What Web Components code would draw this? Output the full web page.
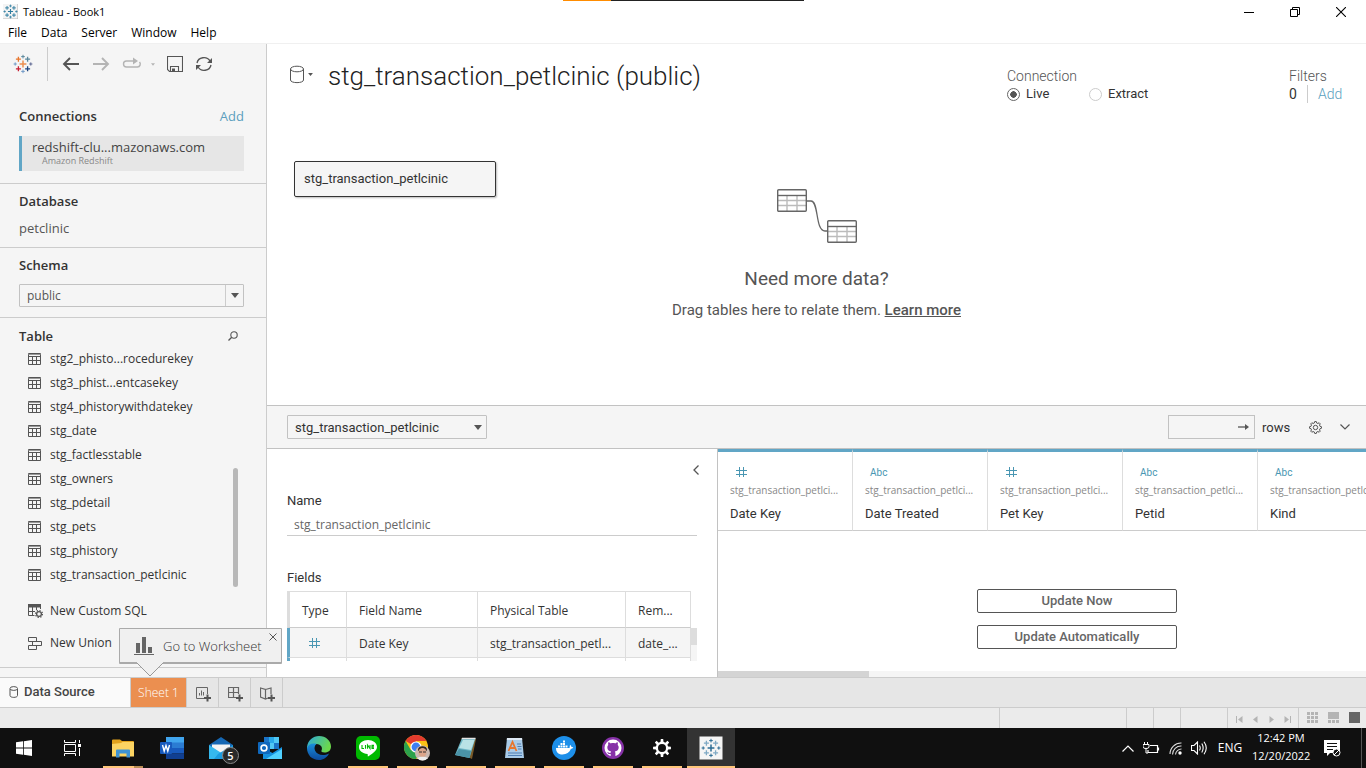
<!DOCTYPE html>
<html lang="en">
<head>
<meta charset="utf-8">
<title>Tableau - Book1</title>
<style>
html, body { margin: 0; height: 100%; }
body { font-family: Roboto, "Liberation Sans", sans-serif; font-size: 13px; color: #333; background: #fff; overflow: hidden; }
</style>
</head>
<body>
<tb-app></tb-app>
<script>
const define = (name, css, html) => {
  const template = document.createElement('template');
  const base = ':host{display:block;box-sizing:border-box}*,*::before{box-sizing:border-box}button,input,select{font:inherit;color:inherit;margin:0;border-radius:0}button{background:none;border:0;padding:0;cursor:pointer}';
  customElements.define(name, class extends HTMLElement {
    connectedCallback() {
      if (this.shadowRoot) return;
      template.innerHTML = `<style>${base}${css}</style>${typeof html === 'function' ? html(this) : html}`;
      this.attachShadow({ mode: 'open' }).append(template.content.cloneNode(true));
    }
  });
};

/* ---------- icons ---------- */
const plus = (x, y, r, c, w) => `<path d="M${x - r} ${y}H${x + r}M${x} ${y - r}V${y + r}" stroke="${c}" stroke-width="${w}"/>`;
const logo = (c) => plus(10, 10, 3.4, c[0], 1.5) + plus(5.4, 5.2, 2.5, c[1], 1.3) + plus(14.6, 5.2, 2.5, c[2], 1.3) +
  plus(5.4, 14.8, 2.5, c[3], 1.3) + plus(14.6, 14.8, 2.5, c[4], 1.3) + plus(10, 2.6, 1.8, c[5], 1) + plus(10, 17.4, 1.8, c[6], 1) +
  plus(2.2, 10, 1.6, c[7], 1) + plus(17.8, 10, 1.6, c[8], 1);
const miniTable = (x, y) => `<g transform="translate(${x} ${y})"><path d="M1 11.5H29M1 16.5H29M10 7V22M20 7V22" stroke="#bbb" stroke-width="1.4"/><path d="M1 6.5H29" stroke="#666" stroke-width="1.4"/><rect x=".7" y=".7" width="28.6" height="21.6" rx="1" stroke="#666" stroke-width="1.4"/></g>`;
const gearPath = (cx, cy, r1, r2, n) => {
  let d = '';
  for (let i = 0; i < n; i++) [-.3, -.17, .17, .3].forEach((o, k) => {
    const a = (i + o) * 2 * Math.PI / n, r = k === 0 || k === 3 ? r1 : r2;
    d += (d ? 'L' : 'M') + (cx + r * Math.cos(a)).toFixed(2) + ' ' + (cy + r * Math.sin(a)).toFixed(2);
  });
  return d + 'Z';
};
const ICONS = {
  logo: [20, 20, logo(['#eb8f50', '#e8762d', '#5b879b', '#c72035', '#1f447e', '#5b879b', '#7199c6', '#7199c6', '#5c6692'])],
  'logo-blue': [20, 20, `<rect x="0" y="0" width="20" height="20" fill="#f4f4f4"/><path d="M20 0V20H0" stroke="#bbb" stroke-width="1.5"/>` + logo(Array(9).fill('#2f7da0'))],
  'logo-tile': [24, 24, `<rect x=".5" y=".5" width="23" height="23" fill="#f5f5f5"/><g transform="translate(2 2)">${logo(['#2b6c94', '#7fa9c4', '#7fa9c4', '#7fa9c4', '#7fa9c4', '#2b6c94', '#2b6c94', '#2b6c94', '#2b6c94'])}</g>`],
  back: [18, 14, '<path d="M17 7H2M8 1L2 7L8 13" stroke="#555" stroke-width="1.9"/>'],
  forward: [18, 14, '<path d="M1 7H16M10 1L16 7L10 13" stroke="#b4b4b4" stroke-width="1.9"/>'],
  redo: [20, 14, '<path d="M12 4H4.500A3 3 0 0 0 4.500 10H15.500A3 3 0 0 0 17.500 5" stroke="#b4b4b4" stroke-width="1.400"/><path d="M11 .5L16 4L11 7.500Z" fill="#b4b4b4"/>'],
  save: [16, 16, '<path d="M.5 .5H15.500V15.500H2.500L.5 13.500Z" stroke="#555" stroke-width="1.1"/><path d="M3.500 15V10.500H11.500V15" stroke="#555" stroke-width="1.1"/><path d="M5 12.500H8V15H5Z" fill="#555"/>'],
  refresh: [18, 16, '<path d="M2 7A7 6.500 0 0 1 15 5M16 9A7 6.500 0 0 1 3 11" stroke="#555" stroke-width="1.300"/><path d="M17 2V7H12Z M1 14V9H6Z" fill="#555"/>'],
  caret: [8, 5, '<path d="M0 0H8L4 5Z" fill="#555"/>'],
  'caret-light': [8, 5, '<path d="M0 0H8L4 5Z" fill="#b4b4b4"/>'],
  search: [10, 10, '<circle cx="6" cy="4" r="3.200" stroke="#555" stroke-width="1.1"/><path d="M3.700 6.300L.5 9.500" stroke="#555" stroke-width="1.3"/>'],
  table: [13, 12, '<path d="M.5 .5H12.500V11.500H.5Z M.5 3.500H12.500M.5 7.500H12.500M4.500 3.500V11.500M8.500 3.500V11.500" stroke="#555"/><path d="M.5 1.500H12.500" stroke="#999"/>'],
  sql: [15, 14, '<path d="M0 0H13V3.500H0Z" fill="#555"/><path d="M.5 2V11.500H6.500M.5 7.500H7M4.500 3V11.500M8.500 3V6M12.500 3V5" stroke="#555"/><circle cx="11" cy="10" r="2.400" stroke="#555" stroke-width="1.3"/><circle cx="11" cy="10" r="3.500" stroke="#555" stroke-width="1.2" stroke-dasharray="1.300 1.450"/>'],
  union: [14, 13, '<path d="M.5 .5H8.500V4.500H.5ZM.5 8.500H8.500V12.500H.5ZM4.500 4.500H13.500V8.500H4.500Z" fill="#f5f5f5" stroke="#555"/>'],
  db: [16, 19, '<path d="M1.500 4V15C1.500 18.500 14.500 18.500 14.500 15V4" stroke="#555"/><ellipse cx="8" cy="4" rx="6.500" ry="2.800" stroke="#555"/>'],
  'db-small': [10, 12, '<path d="M1 3V9.500C1 12 8.500 12 8.500 9.500V3" stroke="#555"/><ellipse cx="4.750" cy="2.500" rx="3.750" ry="1.900" stroke="#555"/>'],
  relate: [80, 54, `<path d="M29 12H34C42 12 38 42 48 42H51" stroke="#666" stroke-width="1.300"/>${miniTable(0, 0)}${miniTable(50, 31)}`],
  number: [11, 10, '<path d="M3.500 0V10M7.500 0V10M0 3.500H11M0 7.500H11" stroke="#4996b2" stroke-width="1"/>'],
  arrow: [11, 8, '<path d="M0 4H8" stroke="#555" stroke-width="1.300"/><path d="M7 1L11 4L7 7Z" fill="#555"/>'],
  gear: [13, 13, `<path d="${gearPath(6.5, 6.5, 4.7, 6, 8)}" stroke="#555"/><circle cx="6.500" cy="6.500" r="2.200" stroke="#555"/>`],
  down: [10, 6, '<path d="M.5 .5L5 5L9.500 .5" stroke="#555" stroke-width="1.200"/>'],
  left: [6, 10, '<path d="M5.500 .5L1 5L5.500 9.500" stroke="#555" stroke-width="1.300"/>'],
  close: [8, 8, '<path d="M.5 .5L7.500 7.500M7.500 .5L.5 7.500" stroke="#555"/>'],
  bars: [20, 18, '<path d="M2 6H6V16H2ZM8 0H12V16H8ZM14 10H18V16H14Z" fill="#666"/><path d="M0 17.500H20" stroke="#666"/>'],
  'add-sheet': [16, 15, '<path d="M8 11.500H.5V.5H11.500V7M3.500 8.500V6M5.500 8.500V3.500M7.500 8.500V5" stroke="#666"/><path d="M11.500 7.500V14.500M8 11H15" stroke="#555" stroke-width="2"/>'],
  'add-dash': [16, 15, '<path d="M8 10.500H.5V.5H10.500V7M5.500 .5V10.500M.5 5.500H10.500" stroke="#666" stroke-width="1.200"/><path d="M11.500 7.500V14.500M8 11H15" stroke="#555" stroke-width="2"/>'],
  'add-story': [16, 15, '<path d="M8 11L5.500 12L.5 10V1L5.500 2.500V12M5.500 2.500L11 1V7" stroke="#666" stroke-width="1.200"/><path d="M11.500 7.500V14.500M8 11H15" stroke="#555" stroke-width="2"/>'],
  first: [7, 7, '<path d="M.5 0V7" stroke="#b4b4b4"/><path d="M6.500 0V7L2 3.500Z" fill="#b4b4b4"/>'],
  prev: [5, 7, '<path d="M4.500 0V7L0 3.500Z" fill="#b4b4b4"/>'],
  next: [5, 7, '<path d="M.5 0V7L5 3.500Z" fill="#b4b4b4"/>'],
  last: [7, 7, '<path d="M6.500 0V7" stroke="#b4b4b4"/><path d="M.5 0V7L5 3.500Z" fill="#b4b4b4"/>'],
  grid: [11, 11, '<path d="M0 0H3V3H0ZM4 0H7V3H4ZM8 0H11V3H8ZM0 4H3V7H0ZM4 4H7V7H4ZM8 4H11V7H8ZM0 8H3V11H0ZM4 8H7V11H4ZM8 8H11V11H8Z" fill="#b4b4b4"/>'],
  film: [11, 11, '<path d="M0 0H11V7H0ZM0 8H3V11H0ZM4 8H7V11H4ZM8 8H11V11H8Z" fill="#b4b4b4"/>'],
  full: [11, 11, '<path d="M0 0H11V11H0Z" fill="#666"/>'],
  min: [10, 10, '<path d="M0 5.500H10" stroke="#000"/>'],
  restore: [10, 10, '<path d="M.5 2.500H7.500V9.500H.5ZM2.500 2.500V.5H9.500V7.500H7.500" stroke="#000"/>'],
  x: [10, 10, '<path d="M0 0L10 10M10 0L0 10" stroke="#000" stroke-width="1.100"/>'],
  /* taskbar */
  start: [16, 16, '<path d="M0 2.300L7 1.300V7.600H0ZM7.800 1.200L16 0V7.600H7.800ZM0 8.400H7V14.700L0 13.700ZM7.800 8.400H16V16L7.800 14.800Z" fill="#fff"/>'],
  taskview: [17, 16, '<path d="M.5 0V2.500H11.500V0M.5 4.500H11.500V11.500H.5ZM.5 16V13.500H11.500V16M15.500 0V3M15.500 8V16" stroke="#fff"/><path d="M14 4H17V7H14Z" fill="#fff"/>'],
  explorer: [22, 19, '<path d="M0 1.500Q0 .5 1 .5H8L10 2H21Q22 2 22 3V16H0Z" fill="#e2a21c"/><path d="M0 5L9 4L10.500 3H22V17.500H0Z" fill="#fcd462"/><path d="M4 18.500V11.500Q4 10.500 5 10.500H17Q18 10.500 18 11.500V18.500H14.500V14.500H7.500V18.500Z" fill="#3f93d2"/>'],
  word: [24, 22, '<path d="M6 0H24V6H6Z" fill="#41a5ee"/><path d="M6 5.500H24V11H6Z" fill="#2b7cd3"/><path d="M6 11H24V16.500H6Z" fill="#185abd"/><path d="M6 16.500H24V22H6Z" fill="#103f91"/><rect x="0" y="5" width="12" height="12" rx="1" fill="#185abd"/><path d="M2.500 8L4.200 14L6 8.500L7.800 14L9.500 8" stroke="#fff" stroke-width="1.400"/>'],
  mail: [24, 22, '<path d="M0 8L12 0L24 8V22H0Z" fill="#1668b4"/><path d="M3 7.500H21V14L12 18L3 14Z" fill="#f4f4f4"/><path d="M0 8L14 17L8 22H0Z" fill="#35b8ee"/><path d="M24 8L9 17L5 22H24Z" fill="#1c9be0"/>'],
  outlook: [24, 22, '<path d="M6 0H21V12H6Z" fill="#1a74c8"/><path d="M11 0H16V6H11Z" fill="#28a8ea"/><path d="M16 0H21V6H16ZM11 6H16V12H11Z" fill="#50c8f5"/><path d="M5 11L14.500 16L24 10V22H5Z" fill="#1490df"/><path d="M8 22L24 12V22Z" fill="#50d0ff"/><rect y="5" width="12" height="12" rx="1" fill="#0f68bd"/><circle cx="6" cy="11" r="2.900" stroke="#fff" stroke-width="1.600"/>'],
  edge: [24, 24, '<defs><linearGradient id="a" x1="0" y1="0" x2="1" y2=".4"><stop stop-color="#2ba8e0"/><stop offset="1" stop-color="#6bd84c"/></linearGradient><linearGradient id="b" x1="0" y1="0" x2="0" y2="1"><stop stop-color="#1a8fdc"/><stop offset="1" stop-color="#0c4a9c"/></linearGradient></defs><path d="M0 11C1 4 6 0 12 0C19 0 24 5 24 10.500C24 15 20.500 16.500 17.500 16.500C15 16.500 14 15.500 14.500 14.500C16 12 14 8 9.500 8C5 8 1 11 0 14Z" fill="url(#a)"/><path d="M0 12C1 9 5 6.500 9.500 8C7.500 9.500 7 12 8 14.500C10 19 16 20.500 22 17.500C20 21.500 16.500 24 12 24C5 24 0 19 0 12Z" fill="url(#b)"/>'],
  line: [24, 24, '<rect width="24" height="24" rx="5" fill="#00b900"/><path d="M12 4C17 4 21 7 21 11C21 15 15 18.500 12 20.500C11.500 20.500 12 18.500 11.500 18C6.500 17.500 3 15 3 11C3 7 7 4 12 4Z" fill="#fff"/><path d="M6 9V12.500H8M9.500 9V12.800M11.500 12.800V9L14 12.500V9M18 9.400H16V12.400H18M16 10.900H18" stroke="#00b900" stroke-width="1.100"/>'],
  chrome: [27, 26, '<circle cx="12" cy="12" r="12" fill="#fbc116"/><path d="M12 12L1.600 6A12 12 0 0 1 22.400 6H12Z" fill="#e33b2e"/><path d="M1.600 6A12 12 0 0 0 12 24L17 15L12 12L6.800 15Z" fill="#2ca24c"/><circle cx="12" cy="12" r="5.600" fill="#fff"/><circle cx="12" cy="12" r="4.400" fill="#3d7ff0"/><circle cx="18.500" cy="18" r="7.500" fill="#c9b8b0"/><path d="M14 14.500C14 10 23 10 23 14.500L22.500 16H14.500Z" fill="#33261f"/><ellipse cx="18.500" cy="17.500" rx="4" ry="4.600" fill="#dca58a"/><path d="M15 17H18M19 17H22" stroke="#333" stroke-width="1.200"/><path d="M13 23Q18.500 20.500 24 23Q18.500 28 13 23Z" fill="#eee"/>'],
  notepad: [24, 22, '<path d="M7 1L22 2L18 22L16 21Z" fill="#7a5a28"/><path d="M8 1H21.500L15.500 21L1 18Z" fill="#6fb7c6"/><path d="M9 3H20.500L17 13L5 11Z" fill="#b9e2e6"/><path d="M1 18L5 12L17 14L15.500 21Z" fill="#4a93a8"/><path d="M8 1.500H21.500" stroke="#e6e6e6" stroke-width="1.500"/>'],
  wordpad: [20, 22, '<path d="M2 1H17L19 21H0Z" fill="#a9cbe8"/><path d="M2 1H17L17.200 3H1.800Z" fill="#dfeaf5"/><path d="M3.500 14L7.500 5L11.500 14M5 11H10" stroke="#e8762d" stroke-width="1.800"/><path d="M12 7H16M12.500 9.500H16.500M13 12H16.500M3 16H17M3 18.500H17" stroke="#4f7fb4" stroke-width="1.200"/>'],
  docker: [24, 24, '<circle cx="12" cy="12" r="12" fill="#1d8fe9"/><path d="M4 12H17.500C18 11.500 17.300 10 18.300 9C19.200 9.500 19.300 10.500 19.500 11C20.500 10.700 21 11 21.300 11.300C20.800 12.600 19.700 12.800 19 12.800C17.500 16.500 14.500 18.500 10.500 18.500C6 18.500 4 16 4 12Z" fill="#fff"/><path d="M6 9.500H8V11.400H6ZM8.500 9.500H10.500V11.400H8.500ZM11 9.500H13V11.400H11ZM13.500 9.500H15.500V11.400H13.500ZM8.500 7H10.500V9H8.500ZM11 7H13V9H11ZM11 4.600H13V6.500H11Z" fill="#fff"/>'],
  github: [22, 22, '<circle cx="11" cy="11" r="11" fill="#8732a8"/><circle cx="11" cy="11" r="8.500" fill="#fff"/><path d="M8.700 20V17C6.300 17.400 5.800 15.800 5 15.200C6.300 14.900 6.600 16.200 8.700 15.800C8.700 15.200 8.900 14.700 9.200 14.400C6.800 14.100 5.300 12.900 5.300 10.300C5.300 9.300 5.700 8.500 6.300 7.900C6.100 7.200 6 6.200 6.400 5.300C7.300 5.300 8.200 6 8.700 6.400C10 6 12 6 13.300 6.400C13.800 6 14.700 5.300 15.600 5.300C16 6.200 15.900 7.200 15.700 7.900C16.300 8.500 16.700 9.300 16.700 10.300C16.700 12.900 15.200 14.100 12.800 14.400C13.200 14.800 13.400 15.400 13.400 16V20Z" fill="#8732a8"/>'],
  settings: [18, 18, `<path fill="#fff" fill-rule="evenodd" d="${gearPath(9, 9, 6.3, 9, 8)}M9 5A4 4 0 1 0 9 13A4 4 0 1 0 9 5Z"/>`],
  up: [12, 7, '<path d="M.5 6.500L6 1L11.500 6.500" stroke="#fff" stroke-width="1.200"/>'],
  battery: [17, 12, '<path d="M7 3.500H14.500V10.500H5V8M15.500 5.500V8.500" stroke="#fff" stroke-width="1.200"/><path d="M1.500 0V2.500M4.500 0V2.500M0 2.500H6V5Q6 6.500 3 6.500Q0 6.500 0 5ZM3 6V11H5" stroke="#fff"/>'],
  wifi: [13, 13, '<path d="M1 12A11 11 0 0 1 12.500 1M3.500 12.500A8.500 8.500 0 0 1 12.500 4M6.500 12.500A6 6 0 0 1 12.500 7" stroke="#ddd" stroke-width="1.100"/><circle cx="11" cy="11" r="1.700" fill="#fff"/>'],
  sound: [17, 14, '<path d="M.5 4.500H3L6.500 1V13L3 9.500H.5Z M8.500 4.500Q10 7 8.500 9.500M10.800 2.500Q13.500 7 10.800 11.500M13 .8Q17.500 7 13 13.200" stroke="#fff" stroke-width="1.100"/>'],
  notify: [17, 17, '<path d="M0 0H16V13H6L3 16V13H0Z" fill="#fff"/><path d="M3 3.500H13M3 6.500H13M3 9.500H9" stroke="#111"/><circle cx="12.500" cy="12.500" r="3.500" fill="#111" stroke="#fff"/><path d="M10 15L15 10" stroke="#fff"/>']
};
define('tb-icon', ':host{display:inline-block;line-height:0;flex:none}svg{display:block;fill:none}', el => {
  const [w, h, body] = ICONS[el.getAttribute('name')];
  return `<svg width="${w}" height="${h}" viewBox="0 0 ${w} ${h}" aria-hidden="true">${body}</svg>`;
});
const icon = n => `<tb-icon name="${n}"></tb-icon>`;

/* ---------- window chrome ---------- */
define('tb-titlebar', `
:host{position:relative;display:flex;align-items:center;height:23px;padding-left:3px;gap:5px;font:11px "Open Sans",sans-serif;color:#000;background:#fff}
.name{flex:1}
.controls{display:flex;padding-right:2px}
button{width:46px;height:22px;display:grid;place-items:center}
.strip{position:absolute;top:0;left:41.2%;width:241px;height:1px;background:linear-gradient(90deg,#ff8c00 48px,#222 48px)}
.app{width:15px;height:15px;overflow:hidden}
`, `<svg class="app" viewBox="0 0 20 20" fill="none" aria-hidden="true">${ICONS['logo-blue'][2]}</svg><span class="name">Tableau - Book1</span><span class="strip"></span>
<div class="controls"><button aria-label="Minimize">${icon('min')}</button><button aria-label="Restore">${icon('restore')}</button><button aria-label="Close">${icon('x')}</button></div>`);

define('tb-menubar', `
:host{display:flex;height:21px;align-items:flex-end;padding:0 0 1px 8px;gap:14px;font:12px "Open Sans",sans-serif;color:#000;border-bottom:1px solid #f0f0f0;background:#fff}
button{line-height:18px}
`, ['File', 'Data', 'Server', 'Window', 'Help'].map(t => `<button>${t}</button>`).join(''));

/* ---------- sidebar ---------- */
define('tb-toolbar', `
:host{display:flex;align-items:center;height:40px;padding-left:13px}
.rule{width:1px;height:34px;background:#ccc;margin:0 14px}
button{display:grid;place-items:center}
.tools{display:flex;align-items:center;gap:12px}
.tools button{height:24px}
.tools .redo{display:flex;gap:9px}
.small{width:4px;height:3px}
`, `<button aria-label="Start page">${icon('logo')}</button><span class="rule"></span>
<div class="tools"><button aria-label="Back">${icon('back')}</button><button aria-label="Forward">${icon('forward')}</button>
<button class="redo" aria-label="Replay">${icon('redo')}<svg class="small" viewBox="0 0 8 5">${ICONS['caret-light'][2]}</svg></button>
<button aria-label="Save">${icon('save')}</button><button aria-label="Refresh">${icon('refresh')}</button></div>`);

define('tb-section', `
:host{border-bottom:1px solid #ccc;padding:7px 22px 0 19px}
header{display:flex;justify-content:space-between;align-items:center;height:20px}
h2{margin:0;font:600 13px/20px "Open Sans",sans-serif;color:#333}
`, el => `<header><h2>${el.getAttribute('heading')}</h2><slot name="action"></slot></header><slot></slot>`);

define('tb-select', `
:host{display:grid}
select,.caret{grid-area:1/1}
select{appearance:none;width:100%;height:var(--h,24px);border:1px solid #c2c2c2;border-radius:1px;background:#f5f5f5;padding:0 24px 0 7px;font-size:var(--size,13px);outline:0}
.caret{justify-self:end;display:grid;place-items:center;width:19px;margin:1px 0;pointer-events:none;border-left:1px solid var(--divider,transparent)}
`, el => `<select aria-label="${el.getAttribute('label')}"><option>${el.getAttribute('value')}</option></select><span class="caret">${icon('caret')}</span>`);

define('tb-item', `
:host{height:var(--row,24px);display:flex;align-items:center}
button{display:flex;align-items:center;padding-left:28px;font:12px/20px "Open Sans",sans-serif;color:#333}
.i{width:22px;display:flex}
`, el => `<button><span class="i">${icon(el.getAttribute('icon') || 'table')}</span><slot></slot></button>`);

define('tb-sidebar', `
:host{display:flex;flex-direction:column;background:#f5f5f5;border-right:1px solid #ccc;font-family:"Open Sans",sans-serif;min-height:0}
a{color:#5b9fbe;text-decoration:none}
.conn{padding-top:22px;padding-bottom:12px}
.card{width:100%;text-align:left;display:flex;flex-direction:column;justify-content:flex-start;height:35px;margin-top:10px;padding-top:3px;border-left:3px solid #61a6c6;background:#e6e6e6;padding-left:10px;color:#444}
.card b{font:13px/16px "Open Sans",sans-serif}
.card small{font-size:9px;line-height:12px;color:#888;padding-left:10px}
.db{padding-bottom:9px}
.db p{margin:7px 0 0;line-height:20px;font-size:13px;color:#555}
.schema{padding-bottom:10px}
tb-select{margin-top:9px;--h:23px;--size:12px;--divider:#ccc;color:#555}
.tables{flex:1;padding-top:8px;padding-right:28px;padding-bottom:8px;display:flex;flex-direction:column}
.list{position:relative;margin:1px -28px 8px -19px}
.list::before{content:"";position:absolute;right:28px;bottom:0;width:5px;height:119px;border-radius:3px;background:#b8b8b8}
.extra{margin-left:-19px;--row:32px}
.foot{height:9px}
`, `<tb-toolbar></tb-toolbar>
<tb-section class="conn" heading="Connections"><a slot="action" href="#add">Add</a>
<button class="card"><b>redshift-clu...mazonaws.com</b><small>Amazon Redshift</small></button></tb-section>
<tb-section class="db" heading="Database"><p>petclinic</p></tb-section>
<tb-section class="schema" heading="Schema"><tb-select label="Schema" value="public"></tb-select></tb-section>
<tb-section class="tables" heading="Table"><button slot="action" aria-label="Search tables">${icon('search')}</button>
<div class="list">${['stg2_phisto...rocedurekey', 'stg3_phist...entcasekey', 'stg4_phistorywithdatekey', 'stg_date', 'stg_factlesstable', 'stg_owners', 'stg_pdetail', 'stg_pets', 'stg_phistory', 'stg_transaction_petlcinic'].map(t => `<tb-item>${t}</tb-item>`).join('')}</div>
<div class="extra"><tb-item icon="sql">New Custom SQL</tb-item><tb-item icon="union">New Union</tb-item></div></tb-section>
<div class="foot"></div>`);

/* ---------- canvas ---------- */
define('tb-header', `
:host{display:flex;align-items:flex-start;padding:17px 24px 0 22px;height:74px}
.src{display:flex;align-items:center;gap:3px;height:26px}
.src svg{width:5px;height:3px}
h1{flex:1;margin:0 0 0 15px;font:300 26px/30px Roboto,sans-serif;color:#222}
.conn,.filters{font-size:14px;line-height:18px;padding-top:6px}
.conn{width:282px}
.cap{font-weight:300;color:#555}
fieldset{border:0;margin:0;padding:0}
.row{display:flex;align-items:center}
label{display:flex;align-items:center;gap:6px;font-size:13px;width:82px}
input{appearance:none;width:13px;height:13px;border:1px solid #ccc;border-radius:50%;background:#fff}
input:checked{border-color:#666;background:radial-gradient(#555 0 3px,#fff 3.5px)}
.filters{width:53px}
.filters a{color:#5b9fbe;text-decoration:none;font-weight:300;border-left:1px solid #ccc;padding-left:10px;margin-left:10px}
`, `<button class="src" aria-label="Data source">${icon('db')}<svg viewBox="0 0 8 5">${ICONS.caret[2]}</svg></button>
<h1>stg_transaction_petlcinic (public)</h1>
<fieldset class="conn"><div class="cap">Connection</div><div class="row"><label><input type="radio" name="c" checked>Live</label><label><input type="radio" name="c">Extract</label></div></fieldset>
<div class="filters"><div class="cap">Filters</div><div class="row">0<a href="#filters">Add</a></div></div>`);

define('tb-canvas', `
:host{position:relative;flex:1;min-height:0;display:flex;flex-direction:column}
.node{position:absolute;left:27px;top:117px;width:202px;height:36px;border:1px solid #333;border-radius:2px;background:#f5f5f5;text-align:left;padding:0 9px 2px;box-shadow:1px 1px 2px #bbb}
.empty{flex:1;display:flex;flex-direction:column;align-items:center;padding-top:71px;color:#555}
h2{margin:24px 0 0;font:400 19px/24px Roboto,sans-serif;color:#555}
p{margin:9px 0 0;font-size:15px;line-height:20px}
a{color:#555;font-weight:500}
`, `<tb-header></tb-header><button class="node">stg_transaction_petlcinic</button>
<div class="empty">${icon('relate')}<h2>Need more data?</h2><p>Drag tables here to relate them. <a href="#learn">Learn more</a></p></div>`);

/* ---------- preview pane ---------- */
define('tb-previewbar', `
:host{display:flex;align-items:center;height:44px;background:#f5f5f5;border:solid #c2c2c2;border-width:1px 0;padding:0 15px 0 20px}
tb-select{width:200px}
.rows{margin-left:auto;display:grid;align-items:center;width:87px}
.rows>*{grid-area:1/1}
.rows tb-icon{justify-self:end;margin-right:6px}
input{width:100%;height:24px;border:1px solid #c2c2c2;background:#f5f5f5;padding:0 24px 0 6px;outline:0}
label{margin-left:7px;width:47px;font-size:13px}
button{display:grid;place-items:center;height:24px}
.down{margin-left:17px;padding:0 1px}
`, `<tb-select label="Table" value="stg_transaction_petlcinic"></tb-select>
<div class="rows"><input id="rows" type="text">${icon('arrow')}</div><label for="rows">rows</label>
<button aria-label="Settings">${icon('gear')}</button><button class="down" aria-label="Collapse">${icon('down')}</button>`);

define('tb-fields', `
:host{display:flex;height:70px;overflow:hidden}
table{width:404px;border-collapse:separate;border-spacing:0;table-layout:fixed;border-top:1px solid #ddd;font:500 12px/18px "Open Sans",sans-serif}
th,td{border-right:1px solid #ddd;text-align:left;font-weight:500;padding:2px 0 0 12px;white-space:nowrap}
th{height:36px;border-bottom:1px solid #ccc}
td{height:30px;background:#f5f5f5;border-bottom:1px solid #ddd;font-weight:400}
th:first-child{border-left:3px solid #ddd}
td:first-child{border-left:3px solid #61a6c6;padding-left:19px}
.track{width:6px;margin-top:37px;background:#f5f5f5}
.track::before{content:"";display:block;height:17px;background:#ddd}
.next td{background:#fff}
`, `<table><colgroup><col style="width:60px"><col style="width:131px"><col style="width:148px"><col></colgroup>
<thead><tr><th>Type</th><th>Field Name</th><th>Physical Table</th><th>Rem...</th></tr></thead>
<tbody><tr><td>${icon('number')}</td><td>Date Key</td><td>stg_transaction_petl...</td><td>date_...</td></tr><tr class="next"><td></td><td></td><td></td><td></td></tr></tbody></table><div class="track"></div>`);

define('tb-details', `
:host{width:451px;border-right:1px solid #c2c2c2;padding:10px 20px 0;display:flex;flex-direction:column}
.top{display:flex;justify-content:flex-end;height:22px;align-items:center;margin-right:-4px}
.top button{width:10px;height:22px;display:grid;place-items:center}
label,h3{margin:0;font:400 13px/18px Roboto,sans-serif;color:#333}
label{margin-top:11px}
input{border:0;border-bottom:1px solid #ccc;height:26px;padding:4px 7px 0;font:12px "Open Sans",sans-serif;color:#666;outline:0;background:none}
h3{margin:33px 0 4px}
tb-fields{margin-right:-1px}
.body{display:flex;flex-direction:column}
`, `<div class="top"><button aria-label="Collapse details">${icon('left')}</button></div>
<div class="body"><label for="name">Name</label><input id="name" type="text" value="stg_transaction_petlcinic"><h3>Fields</h3><tb-fields></tb-fields></div>`);

define('tb-grid', `
:host{flex:1;min-width:0;overflow:hidden;display:flex;flex-direction:column}
table{width:675px;table-layout:fixed;border-collapse:separate;border-spacing:0}
th{height:82px;border-right:1px solid #ddd;border-bottom:1px solid #ccc;border-top:3px solid #61a6c6;padding:10px 0 0 12px;text-align:left;font-weight:400;vertical-align:top;white-space:nowrap}
.type{height:20px;display:flex;align-items:center;padding-left:6px;font-size:10px;color:#4996b2}
.abc{padding-left:5px}
.src{font:400 10px/16px "Open Sans",sans-serif;color:#888}
.name{font:400 13px/18px Roboto,sans-serif;padding-top:7px;line-height:18px}
.actions{flex:1;display:flex;flex-direction:column;align-items:center;gap:12px;padding:58px 0 0 70px}
.actions button{width:200px;height:24px;border:1px solid #555;border-radius:2px;font-weight:500;color:#666;background:#fff;padding-bottom:2px}
.track{height:6px;background:#f5f5f5}
.track::before{content:"";display:block;width:151px;height:6px;background:#d4d4d4}
`, `<table><thead><tr>${[['#', 'Date Key'], ['Abc', 'Date Treated'], ['#', 'Pet Key'], ['Abc', 'Petid'], ['Abc', 'Kind']].map(([t, n]) =>
  `<th><div class="type ${t === '#' ? '' : 'abc'}">${t === '#' ? icon('number') : t}</div><div class="src">stg_transaction_petlci...</div><div class="name">${n}</div></th>`).join('')}</tr></thead></table>
<div class="actions"><button>Update Now</button><button>Update Automatically</button></div><div class="track"></div>`);

/* ---------- bottom bars ---------- */
/* the hint floats over the tabs and the sidebar */
define('tb-tooltip', `
:host{position:absolute;left:119px;bottom:64px;width:163px;height:36px;z-index:2}
.box{position:relative;height:36px;display:flex;align-items:center;padding:1px 0 0 14px;background:#f0f0f0;border:1px solid #aaa;border-bottom-width:2px;border-radius:1px;font:300 13px "Open Sans",sans-serif;color:#333}
.x{position:absolute;right:3px;top:3px;width:10px;height:10px;display:grid;place-items:center}
.tip{position:absolute;left:17px;top:34px;display:block}
.go{display:flex;align-items:center;gap:9px}
`, `<div class="box"><button class="go">${icon('bars')}Go to Worksheet</button><button class="x" aria-label="Close">${icon('close')}</button></div>
<svg class="tip" width="28" height="15" viewBox="0 0 28 15" aria-hidden="true"><path d="M1 0H27V1L14 14L1 1Z" fill="#f0f0f0"/><path d="M1 1L14 14L27 1" fill="none" stroke="#999"/></svg>`);

define('tb-tabs', `
:host{display:flex;height:30px;background:#e6e6e6;border-top:1px solid #ccc}
button{display:flex;align-items:center;border-right:1px solid #ccc}
.ds{width:131px;padding:0 0 2px 9px;gap:5px;background:#fafafa;font-weight:500;color:#444}
.sheet{width:56px;justify-content:center;background:#eb8f50;color:#fff;font:300 12px "Open Sans",sans-serif}
.new{width:32px;justify-content:center;padding:3px 0 0 2px}
`, `<button class="ds">${icon('db-small')}Data Source</button><button class="sheet">Sheet 1</button>
<button class="new" aria-label="New worksheet">${icon('add-sheet')}</button><button class="new" aria-label="New dashboard">${icon('add-dash')}</button><button class="new" aria-label="New story">${icon('add-story')}</button>`);

define('tb-status', `
:host{display:flex;justify-content:flex-end;height:21px;background:#ebebeb;border-top:1px solid #ccc}
div{border-left:1px solid #ccc;display:flex;align-items:center}
.a{width:127px}.b{width:27px}.c{width:47px}
.nav{width:71px;justify-content:space-between;padding:0 7px 0 8px}
.views{width:68px;justify-content:space-between;padding:0 6px 0 8px}
`, `<div class="a"></div><div class="b"></div><div class="b"></div><div class="c"></div>
<div class="nav">${['first', 'prev', 'next', 'last'].map(n => `<button aria-label="${n}">${icon(n)}</button>`).join('')}</div>
<div class="views">${['grid', 'film', 'full'].map(n => `<button aria-label="${n} view">${icon(n)}</button>`).join('')}</div>`);

define('tb-task', `
:host{position:relative;width:48px;height:40px;display:grid;place-items:center}
:host([active]){background:#333}
button{width:48px;height:40px;display:grid;place-items:center}
:host([open])::after{content:"";position:absolute;left:4px;right:4px;bottom:0;height:2px;background:#ffc67a}
:host([active])::after{left:0;right:0}
:host([many])::after{background:linear-gradient(90deg,#ffc67a 31px,#b98d55 31px)}
.badge{position:absolute;left:25px;top:19px;width:17px;height:17px;border-radius:50%;background:#2a2a2a;border:1px solid #888;color:#fff;font:600 11px/15px "Open Sans",sans-serif;text-align:center}
`, el => `<button aria-label="${el.getAttribute('icon')}">${icon(el.getAttribute('icon'))}</button>${el.getAttribute('badge') ? `<span class="badge">${el.getAttribute('badge')}</span>` : ''}`);

define('tb-taskbar', `
:host{display:flex;align-items:center;height:40px;background:#101010;color:#fff;font:11px/18px "Open Sans",sans-serif}
.apps{display:flex;gap:1px;margin-left:3px;flex:1}
.tray{display:flex;align-items:center}
.icons{display:flex;align-items:center;gap:9px}
.icons button{height:24px;display:grid;place-items:center}
.lang{width:44px;text-align:center;font-size:12px}
.clock{width:58px;text-align:center;white-space:nowrap;padding-bottom:2px}
.notify{width:51px;display:grid;place-items:center;padding-right:6px}
.peek{width:5px;height:40px;border-left:1px solid #555}
`, `<tb-task icon="start"></tb-task><tb-task icon="taskview"></tb-task>
<div class="apps"><tb-task icon="explorer" open many></tb-task><tb-task icon="word"></tb-task><tb-task icon="mail" badge="5"></tb-task><tb-task icon="outlook"></tb-task><tb-task icon="edge"></tb-task>
${['line', 'chrome', 'notepad', 'wordpad', 'docker', 'github', 'settings'].map(n => `<tb-task icon="${n}" open></tb-task>`).join('')}<tb-task icon="logo-tile" open active></tb-task></div>
<div class="tray"><div class="icons">${['up', 'battery', 'wifi', 'sound'].map(n => `<button aria-label="${n}">${icon(n)}</button>`).join('')}</div>
<span class="lang">ENG</span><div class="clock"><div>12:42 PM</div><div>12/20/2022</div></div><button class="notify" aria-label="Notifications">${icon('notify')}</button><span class="peek"></span></div>`);

define('tb-app', `
:host{display:flex;flex-direction:column;height:100vh}
main{flex:1;min-height:0;display:grid;grid-template-columns:267px minmax(0,1fr)}
.content{display:flex;flex-direction:column;min-height:0}
.preview{display:flex;height:228px}
.bottom{position:relative}
`, `<tb-titlebar></tb-titlebar><tb-menubar></tb-menubar>
<main><tb-sidebar></tb-sidebar><div class="content"><tb-canvas></tb-canvas><tb-previewbar></tb-previewbar><div class="preview"><tb-details></tb-details><tb-grid></tb-grid></div></div></main>
<div class="bottom"><tb-tabs></tb-tabs><tb-status></tb-status><tb-tooltip></tb-tooltip></div><tb-taskbar></tb-taskbar>`);
</script>
</body>
</html>
